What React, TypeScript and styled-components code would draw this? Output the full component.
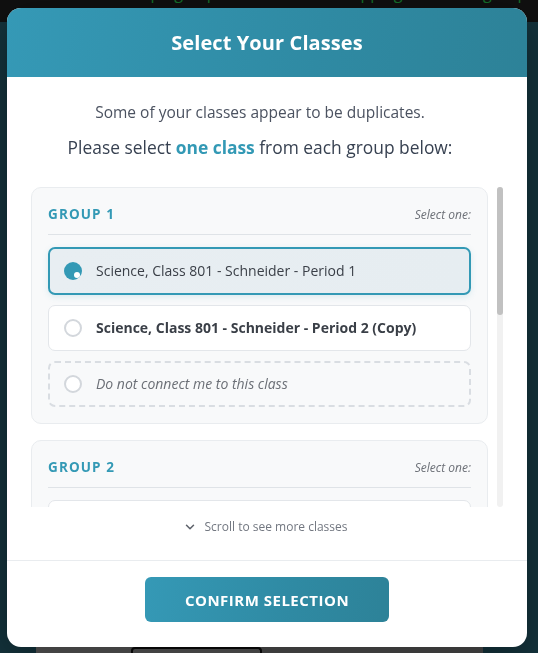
import React from "react";
import styled, { createGlobalStyle } from "styled-components";
import { ChevronDown } from "lucide-react";

const Global = createGlobalStyle`
  html, body { margin: 0; padding: 0; }
  body {
    font-family: "Open Sans", "Noto Sans", sans-serif;
    background: #14333c;
    overflow: hidden;
  }
`;

const Page = styled.div`
  width: 538px;
  height: 653px;
  display: flex;
  flex-direction: column;
  background: #14333c;
`;

const TopBar = styled.div`
  height: 22px;
  background: #101010;
  overflow: hidden;
  display: flex;
  justify-content: center;
`;

const TopText = styled.div`
  color: #15702b;
  font-size: 16px;
  line-height: 16px;
  margin-top: -15px;
  padding-left: 110px;
  white-space: nowrap;
`;

const PageBody = styled.div`
  flex: 1;
  display: flex;
  flex-direction: column;
  justify-content: flex-end;
  padding: 0 55px 0 36px;
`;

const Dock = styled.div`
  height: 6px;
  display: flex;
  background: #555555;
`;

const DockPart = styled.div<{ $w: number; $bg: string; $framed?: boolean }>`
  width: ${(p) => p.$w}px;
  background: ${(p) => p.$bg};
  ${(p) =>
    p.$framed
      ? "border: 2px solid #0a0a0a; border-bottom: none; border-radius: 4px 4px 0 0; box-sizing: border-box;"
      : ""}
`;

const Modal = styled.div`
  position: fixed;
  left: 7px;
  top: 8px;
  width: 520px;
  height: 639px;
  background: #ffffff;
  border-radius: 14px;
  overflow: hidden;
  display: flex;
  flex-direction: column;
  box-shadow: 0 10px 40px rgba(0, 0, 0, 0.35);
`;

const Header = styled.div`
  height: 69px;
  flex: none;
  display: flex;
  align-items: center;
  justify-content: center;
  background: linear-gradient(100deg, #3599b6 0%, #2f8aa3 60%, #2d8298 100%);
`;

const Title = styled.h2`
  margin: 0;
  color: #ffffff;
  font-size: 20px;
  font-weight: 700;
  letter-spacing: 0.1px;
`;

const Body = styled.div`
  flex: 1;
  min-height: 0;
  display: flex;
  flex-direction: column;
  padding: 24px 24px 0;
`;

const Intro = styled.div`
  text-align: center;
  margin-bottom: 28px;
  padding-right: 14px;
`;

const IntroLine = styled.p`
  margin: 0;
  color: #4b5260;
  font-size: 15.5px;
  line-height: 22px;
`;

const IntroLead = styled.p`
  margin: 12px 0 0;
  color: #374151;
  font-size: 17.4px;
  line-height: 24px;
`;

const Accent = styled.strong`
  color: #3399b5;
  font-weight: 700;
`;

const ScrollFrame = styled.div`
  flex: 1;
  min-height: 0;
  display: flex;
  gap: 9px;
`;

const Scroll = styled.div`
  flex: 1;
  min-width: 0;
  overflow-y: auto;
  scrollbar-width: none;
  &::-webkit-scrollbar {
    display: none;
  }
`;

const ScrollTrack = styled.div`
  flex: none;
  width: 6px;
  border-radius: 3px;
  background: #f1f1f1;
  display: flex;
  flex-direction: column;
`;

const ScrollThumb = styled.div`
  height: 128px;
  border-radius: 3px;
  background: #c1c1c1;
`;

const GroupCard = styled.section`
  background: #f8f9fa;
  border: 1px solid #e9ecef;
  border-radius: 10px;
  padding: 16px 16px 16px;
  margin-bottom: 16px;
`;

const GroupHead = styled.div`
  display: flex;
  align-items: center;
  justify-content: space-between;
  padding: 1px 0 11px;
  border-bottom: 1px solid #dfe3e7;
  margin-bottom: 12px;
`;

const GroupLabel = styled.span`
  color: #3399b5;
  font-size: 13.5px;
  font-weight: 700;
  letter-spacing: 1.1px;
  line-height: 18px;
`;

const SelectHint = styled.span`
  color: #6b6f76;
  font-size: 12px;
  font-style: italic;
`;

const Options = styled.div`
  display: flex;
  flex-direction: column;
  gap: 10px;
`;

type Variant = "selected" | "normal" | "none";

const Option = styled.label<{ $variant: Variant }>`
  display: flex;
  align-items: center;
  gap: 14px;
  box-sizing: border-box;
  height: ${(p) => (p.$variant === "selected" ? 48 : 46)}px;
  padding: 0 ${(p) => (p.$variant === "normal" ? 15 : 14)}px;
  border-radius: 7px;
  cursor: pointer;
  border: ${(p) =>
    p.$variant === "selected"
      ? "2px solid #3399b5"
      : p.$variant === "none"
      ? "2px dashed #d9dde2"
      : "1px solid #e3e6ea"};
  background: ${(p) =>
    p.$variant === "selected"
      ? "linear-gradient(90deg, #e8eef2 0%, #e6edf1 100%)"
      : p.$variant === "none"
      ? "#f8f9fa"
      : "#ffffff"};
  box-shadow: ${(p) =>
    p.$variant === "selected" ? "0 2px 6px rgba(51, 153, 181, 0.15)" : "none"};
`;

const Radio = styled.span<{ $checked: boolean }>`
  position: relative;
  flex: none;
  width: 18px;
  height: 18px;
  box-sizing: border-box;
  border-radius: 50%;
  border: ${(p) => (p.$checked ? "none" : "2px solid #d3d7dc")};
  background: ${(p) => (p.$checked ? "#3399b5" : "#ffffff")};

  &::after {
    content: "";
    display: ${(p) => (p.$checked ? "block" : "none")};
    position: absolute;
    left: 10px;
    top: 10px;
    width: 6px;
    height: 6px;
    border-radius: 50%;
    background: #ffffff;
  }
`;

const OptionText = styled.span<{ $variant: Variant }>`
  font-size: 14px;
  line-height: 20px;
  color: ${(p) => (p.$variant === "none" ? "#6b6f76" : "#3a3f47")};
  font-weight: ${(p) => (p.$variant === "normal" ? 700 : 400)};
  font-style: ${(p) => (p.$variant === "none" ? "italic" : "normal")};
`;

const ScrollHint = styled.div`
  flex: none;
  display: flex;
  align-items: center;
  justify-content: center;
  gap: 8px;
  padding: 12px 4px 25px 0;
  color: #727780;
  font-size: 12px;
  line-height: 16px;
`;

const Footer = styled.div`
  flex: none;
  border-top: 1px solid #e9ecef;
  padding: 16px 24px 25px;
  display: flex;
  justify-content: center;
`;

const ConfirmButton = styled.button`
  width: 244px;
  height: 45px;
  border: none;
  border-radius: 6px;
  background: linear-gradient(100deg, #3599b6 0%, #2f8aa3 60%, #2d8298 100%);
  color: #ffffff;
  font-family: "Open Sans", "Noto Sans", sans-serif;
  font-size: 15px;
  font-weight: 700;
  letter-spacing: 0.5px;
  cursor: pointer;
`;

interface Group {
  name: string;
  options: { label: string; variant: Variant }[];
}

const groups: Group[] = [
  {
    name: "GROUP 1",
    options: [
      { label: "Science, Class 801 - Schneider - Period 1", variant: "selected" },
      { label: "Science, Class 801 - Schneider - Period 2 (Copy)", variant: "normal" },
      { label: "Do not connect me to this class", variant: "none" },
    ],
  },
  {
    name: "GROUP 2",
    options: [
      { label: "Math, Class 802 - Schneider - Period 3", variant: "normal" },
      { label: "Math, Class 802 - Schneider - Period 3 (Copy)", variant: "normal" },
      { label: "Do not connect me to this class", variant: "none" },
    ],
  },
  {
    name: "GROUP 3",
    options: [
      { label: "English, Class 803 - Schneider - Period 4", variant: "normal" },
      { label: "English, Class 803 - Schneider - Period 4 (Copy)", variant: "normal" },
      { label: "Do not connect me to this class", variant: "none" },
    ],
  },
];

export default function App() {
  return (
    <>
      <Global />
      <Page>
        <TopBar>
          <TopText>Grouping duplicate classes — mapping rosters to groups</TopText>
        </TopBar>
        <PageBody>
          <Dock>
            <DockPart $w={95} $bg="#565656" />
            <DockPart $w={131} $bg="#555555" $framed />
            <DockPart $w={128} $bg="#4d4d4d" />
            <DockPart $w={93} $bg="#4a4a4a" />
          </Dock>
        </PageBody>
      </Page>
      <Modal role="dialog" aria-modal="true">
        <Header>
          <Title>Select Your Classes</Title>
        </Header>
        <Body>
          <Intro>
            <IntroLine>Some of your classes appear to be duplicates.</IntroLine>
            <IntroLead>
              Please select <Accent>one class</Accent> from each group below:
            </IntroLead>
          </Intro>
          <ScrollFrame>
            <Scroll>
              {groups.map((g) => (
                <GroupCard key={g.name}>
                  <GroupHead>
                    <GroupLabel>{g.name}</GroupLabel>
                    <SelectHint>Select one:</SelectHint>
                  </GroupHead>
                  <Options>
                    {g.options.map((o, i) => (
                      <Option key={i} $variant={o.variant}>
                        <Radio $checked={o.variant === "selected"} />
                        <OptionText $variant={o.variant}>{o.label}</OptionText>
                      </Option>
                    ))}
                  </Options>
                </GroupCard>
              ))}
            </Scroll>
            <ScrollTrack aria-hidden="true">
              <ScrollThumb />
            </ScrollTrack>
          </ScrollFrame>
          <ScrollHint>
            <ChevronDown size={14} strokeWidth={2.6} color="#5f646c" />
            Scroll to see more classes
          </ScrollHint>
        </Body>
        <Footer>
          <ConfirmButton>CONFIRM SELECTION</ConfirmButton>
        </Footer>
      </Modal>
    </>
  );
}
